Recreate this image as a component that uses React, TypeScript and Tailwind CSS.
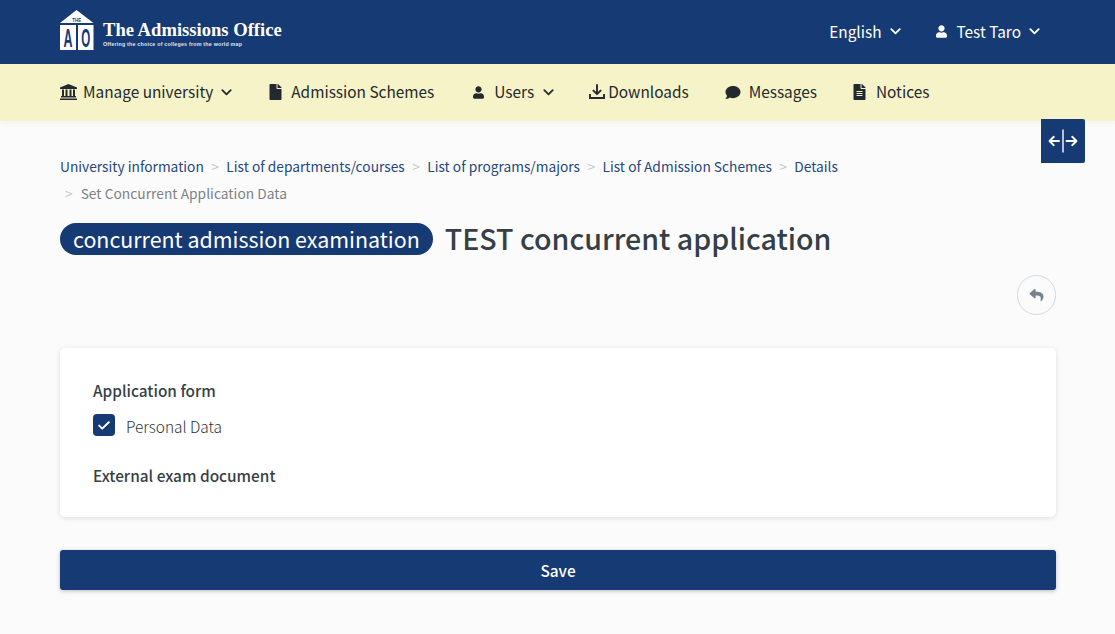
import { FaFile, FaUser, FaComment, FaFileAlt, FaReply } from "react-icons/fa";

const font = { fontFamily: '"Noto Sans CJK JP", "Noto Sans", sans-serif' };

function Chevron({ className }: { className?: string }) {
  return (
    <svg width="11" height="7" viewBox="0 0 11 7" className={className} fill="none" stroke="currentColor" strokeWidth="1.8" strokeLinecap="round" strokeLinejoin="round">
      <path d="M1.3 1.2 5.5 5.4 9.7 1.2" />
    </svg>
  );
}

function Logo() {
  return (
    <svg width="34" height="40" viewBox="0 0 34 40" className="block overflow-visible -mt-[4px]">
      <path d="M16.5 0 33.5 13H0Z" fill="#fff" />
      <rect x="0" y="15" width="16" height="25" fill="#fff" />
      <rect x="18" y="15" width="15.5" height="25" fill="#fff" />
      <text x="16.7" y="11.5" textAnchor="middle" fontSize="6" fontWeight="700" fill="#163a74" fontFamily="Liberation Sans" textLength="9" lengthAdjust="spacingAndGlyphs">THE</text>
      <text x="8" y="37" textAnchor="middle" fontSize="25" fontWeight="700" fill="#163a74" fontFamily="Liberation Sans" textLength="9" lengthAdjust="spacingAndGlyphs">A</text>
      <text x="25.7" y="37" textAnchor="middle" fontSize="25" fontWeight="700" fill="#163a74" fontFamily="Liberation Sans" textLength="9" lengthAdjust="spacingAndGlyphs">O</text>
    </svg>
  );
}

function BankIcon() {
  return (
    <svg width="17" height="16" viewBox="0 0 17 16" fill="currentColor">
      <path d="M8.5 0 17 3.4V5H0V3.4Z" />
      <rect x="2" y="5.5" width="2" height="6.5" />
      <rect x="5.5" y="5.5" width="2" height="6.5" />
      <rect x="9.5" y="5.5" width="2" height="6.5" />
      <rect x="13" y="5.5" width="2" height="6.5" />
      <rect x="1" y="12" width="15" height="1.5" />
      <rect x="0" y="14.5" width="17" height="1.5" />
    </svg>
  );
}

function DownloadIcon() {
  return (
    <svg width="16" height="16" viewBox="0 0 16 16" fill="none" stroke="currentColor" strokeWidth="1.9">
      <path d="M8 1v9M4.4 6.6 8 10.2l3.6-3.6" strokeLinecap="round" strokeLinejoin="round" />
      <path d="M1 10v4h14v-4" strokeLinejoin="miter" />
    </svg>
  );
}

function SplitIcon() {
  return (
    <svg width="30" height="24" viewBox="0 0 30 24" fill="none" stroke="#fff" strokeLinecap="round" strokeLinejoin="round">
      <path d="M15 1v22" strokeWidth="1.4" />
      <path d="M1.5 12H11M5.8 7.8 1.5 12l4.3 4.2" strokeWidth="1.9" />
      <path d="M18.5 12H28.5M24.2 7.8 28.5 12l-4.3 4.2" strokeWidth="1.9" />
    </svg>
  );
}

const crumbs = ["University information", "List of departments/courses", "List of programs/majors", "List of Admission Schemes", "Details"];

export default function App() {
  return (
    <div className="relative min-h-[634px] bg-[#fbfbfb] text-[#363f45] overflow-hidden" style={font}>
      <header className="h-16 bg-[#163a74] flex items-center justify-between pl-[60px] pr-[75px] text-white">
        <div className="flex items-center gap-[9px]">
          <Logo />
          <div className="flex flex-col mt-[1px]">
            <span className="text-[18.6px] font-bold leading-[23px] text-white" style={{ fontFamily: '"Liberation Serif", serif' }}>The Admissions Office</span>
            <span className="text-[5.35px] font-bold leading-[7px] text-[#dfe6f2] tracking-[0.2px]" style={{ fontFamily: '"Liberation Sans", sans-serif' }}>Offering the choice of colleges from the world map</span>
          </div>
        </div>
        <div className="flex items-center text-[15.4px] -mt-[1px]">
          <div className="flex items-center">
            <span>English</span>
            <Chevron className="ml-[8px]" />
          </div>
          <div className="flex items-center ml-[35px]">
            <FaUser className="w-[11px] h-[13px]" />
            <span className="ml-[10px]">Test Taro</span>
            <Chevron className="ml-[8px]" />
          </div>
        </div>
      </header>

      <nav className="h-[57px] bg-[#f6f3c8] flex items-center pl-[60px] text-[15.4px] text-[#23292f] shadow-[0_2px_6px_rgba(0,0,0,0.04)]">
        <div className="flex items-center">
          <BankIcon />
          <span className="ml-[6px] -mt-[2px]">Manage university</span>
          <Chevron className="ml-[8px]" />
        </div>
        <div className="flex items-center ml-[37px]">
          <FaFile className="w-[13px] h-[16px]" />
          <span className="ml-[9px] -mt-[2px]">Admission Schemes</span>
        </div>
        <div className="flex items-center ml-[39px]">
          <FaUser className="w-[11px] h-[13px]" />
          <span className="ml-[10px] -mt-[2px]">Users</span>
          <Chevron className="ml-[9px]" />
        </div>
        <div className="flex items-center ml-[35px]">
          <DownloadIcon />
          <span className="ml-[3px] -mt-[2px]">Downloads</span>
        </div>
        <div className="flex items-center ml-[36px]">
          <FaComment className="w-[16px] h-[15px]" />
          <span className="ml-[8px] -mt-[2px]">Messages</span>
        </div>
        <div className="flex items-center ml-[36px]">
          <FaFileAlt className="w-[13px] h-[16px]" />
          <span className="ml-[10px] -mt-[2px]">Notices</span>
        </div>
      </nav>

      <button className="absolute left-[1041px] top-[119px] w-[44px] h-[44px] bg-[#163a74] rounded-tr-[2px] rounded-br-[2px] flex items-center justify-center">
        <SplitIcon />
      </button>

      <main className="pl-[60px] pr-[59px]">
        <div className="pt-[32px] text-[13.75px] leading-[27px] text-[#26477f] w-[800px] flex flex-wrap">
          {crumbs.map((c, i) => (
            <span key={c} className="flex items-center">
              {i > 0 && <span className="text-[#c3c8cd] mx-[7.4px]">&gt;</span>}
              <span>{c}</span>
            </span>
          ))}
          <span className="flex items-center w-full pl-[5px] text-[#7b8389]">
            <span className="text-[#c3c8cd] mr-[8px]">&gt;</span>
            <span className="tracking-[0.03px]">Set Concurrent Application Data</span>
          </span>
        </div>

        <div className="flex items-center mt-[15px] h-[34px]">
          <span className="bg-[#163a74] text-white rounded-full h-[32px] px-[13px] text-[21.4px] leading-[32px] flex items-center">concurrent admission examination</span>
          <h1 className="ml-[12px] -mt-[2px] text-[28.6px] font-medium leading-[34px] text-[#363f45]">TEST concurrent application</h1>
        </div>

        <div className="flex justify-end mt-[19px]">
          <button className="w-[39px] h-[40px] rounded-full border border-[#d3d9e0] flex items-center justify-center text-[#78828a]">
            <FaReply className="w-[15px] h-[14px]" />
          </button>
        </div>

        <section className="mt-[33px] h-[169px] bg-white rounded-[5px] shadow-[0_1px_5px_rgba(0,0,0,0.12)] px-[33px] pt-[30px]">
          <div className="text-[15.4px] font-medium leading-[24px]">Application form</div>
          <label className="flex items-center mt-[12px] h-[22px]">
            <span className="w-[22px] h-[22px] rounded-[4px] bg-[#163a74] flex items-center justify-center text-white">
              <svg width="12" height="9" viewBox="0 0 12 9" fill="none" stroke="currentColor" strokeWidth="2" strokeLinecap="round" strokeLinejoin="round">
                <path d="M1.2 4.6 4.2 7.6 10.8 1.2" />
              </svg>
            </span>
            <span className="ml-[11px] mt-[4px] text-[15.4px] font-light text-[#2b3338]">Personal Data</span>
          </label>
          <div className="text-[15.4px] font-medium leading-[24px] mt-[27px]">External exam document</div>
        </section>

        <button className="mt-[33px] w-full h-[40px] pt-[2px] bg-[#163a74] rounded-[3px] text-white text-[15.4px] font-medium shadow-[0_1px_4px_rgba(0,0,0,0.25)]">Save</button>
      </main>
    </div>
  );
}
